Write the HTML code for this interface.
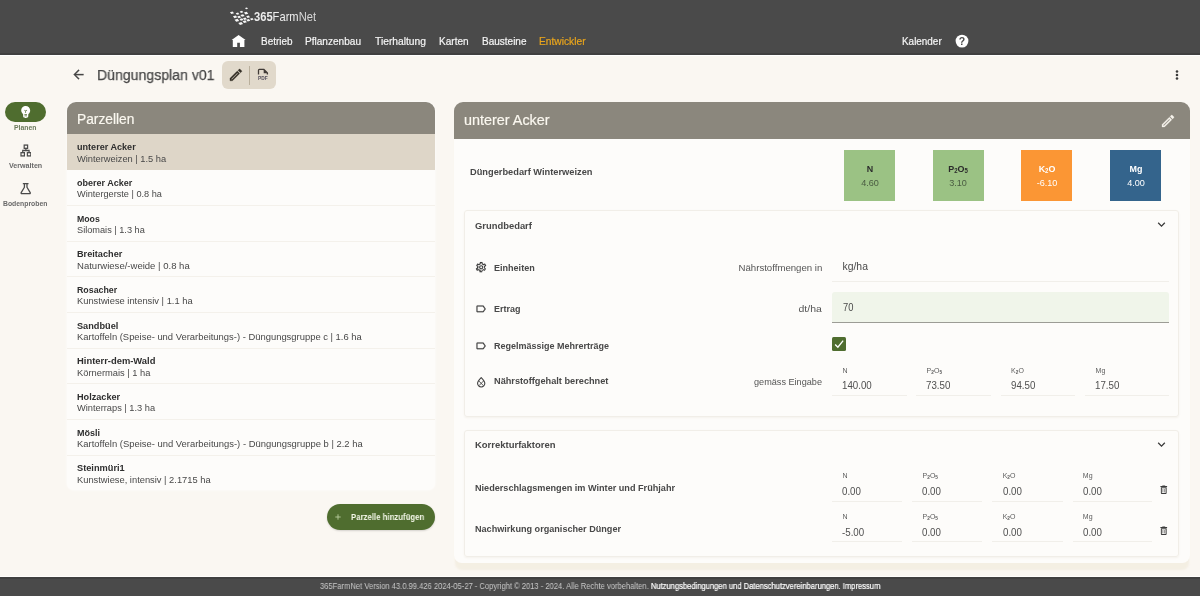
<!DOCTYPE html>
<html lang="de"><head><meta charset="utf-8"><title>Düngungsplan v01</title>
<style>
html,body{margin:0;padding:0}body{width:1200px;height:596px;overflow:hidden;position:relative;background:#faf7f2;font-family:"Liberation Sans", sans-serif}
.t{position:absolute;white-space:nowrap;line-height:20px;height:20px}
#app{position:absolute;left:0;top:0;width:1200px;height:596px;will-change:transform}
sub{font-size:68%;font-weight:700;vertical-align:baseline;position:relative;top:.2em;line-height:0}
</style></head>
<body>
<div id="app">
<div style="position:absolute;left:0;top:0;width:1200px;height:53px;background:#4a4a4a"></div>
<div style="position:absolute;left:0;top:53px;width:1200px;height:2px;background:#404040"></div>
<div style="position:absolute;left:0;top:55px;width:1200px;height:1px;background:#fff"></div>
<svg style="position:absolute;left:0;top:0" width="300" height="40" viewBox="0 0 300 40" fill="#f6f6f6"><polygon points="244.99,7.98 246.95,7.39 248.01,8.72 246.05,9.31"/><polygon points="229.95,12.30 232.61,11.50 234.05,13.30 231.39,14.10"/><polygon points="235.66,13.25 238.04,12.54 239.34,14.15 236.96,14.86"/><polygon points="239.66,11.40 242.04,10.69 243.34,12.30 240.96,13.01"/><polygon points="243.94,12.57 246.74,11.73 248.26,13.63 245.46,14.47"/><polygon points="232.94,16.27 235.74,15.43 237.26,17.33 234.46,18.17"/><polygon points="237.16,16.52 239.68,15.77 241.04,17.48 238.52,18.23"/><polygon points="240.34,14.97 243.14,14.13 244.66,16.03 241.86,16.87"/><polygon points="246.16,16.32 248.68,15.57 250.04,17.28 247.52,18.03"/><polygon points="234.52,19.72 237.60,18.79 239.28,20.88 236.20,21.81"/><polygon points="239.45,19.00 242.11,18.20 243.55,20.00 240.89,20.80"/><polygon points="242.96,18.22 245.48,17.47 246.84,19.18 244.32,19.93"/><polygon points="246.25,19.80 248.91,19.00 250.35,20.80 247.69,21.60"/><polygon points="249.96,18.65 252.34,17.94 253.64,19.55 251.26,20.26"/><polygon points="238.32,22.92 241.40,21.99 243.08,24.08 240.00,25.01"/><polygon points="242.54,21.17 245.34,20.33 246.86,22.23 244.06,23.07"/></svg>
<svg style="position:absolute;left:0;top:0" width="300" height="54" viewBox="0 0 300 54" fill="#fff"><path d="M238.600 35.100L245.600 39.900H244.400V46.900H239.900V42.700H237.200V46.900H232.800V39.900H231.600Z"/></svg>
<svg style="position:absolute;left:955px;top:34px" width="14" height="14" viewBox="0 0 14 14"><circle cx="7" cy="7.1" r="6.4" fill="#fff"/><text x="7" y="10.8" text-anchor="middle" font-family='"Liberation Sans", sans-serif' font-weight="700" font-size="10.5" fill="#4a4a4a">?</text></svg>
<svg style="position:absolute;left:71.3px;top:67.4px" width="15" height="15" viewBox="0 0 24 24" fill="#484848" stroke="#484848" stroke-width="0.4"><path d="M20 11H7.83l5.59-5.59L12 4l-8 8 8 8 1.41-1.41L7.83 13H20v-2z"/></svg>
<div style="position:absolute;left:222px;top:61px;width:54px;height:28px;border-radius:6px;background:#e1d9cb"></div>
<div style="position:absolute;left:249px;top:65.5px;width:1px;height:19px;background:#b9af9c"></div>
<svg style="position:absolute;left:228.3px;top:66.7px" width="15.8" height="15.8" viewBox="0 0 24 24" fill="#352f27" stroke="#352f27" stroke-width="0.45"><path d="M14.060 9.020l.92.920L5.920 19H5v-.92l9.060-9.060M17.660 3c-.25 0-.51.100-.7.290l-1.830 1.830 3.750 3.750 1.830-1.830c.39-.39.39-1.020 0-1.410l-2.340-2.340c-.2-.2-.45-.29-.71-.29zm-3.600 3.190L3 17.250V21h3.750L17.810 9.940l-3.750-3.750z"/></svg>
<svg style="position:absolute;left:256px;top:67.3px" width="14" height="15" viewBox="0 0 14 15"><path d="M2.500 7.400V3.200a.9.900 0 0 1 .9-.9h4.300l3.700 3.700v1.400" fill="none" stroke="#403a36" stroke-width="1.300" stroke-linejoin="round"/><path d="M7.700 2.300v3.900h3.900z" fill="#403a36"/><text x="6.900" y="13.100" text-anchor="middle" font-family='"Liberation Sans", sans-serif' font-weight="700" font-size="4.800" fill="#55505c">PDF</text></svg>
<svg style="position:absolute;left:1170.4px;top:67.7px" width="14" height="14" viewBox="0 0 24 24" fill="#3a3a3a"><circle cx="12" cy="6" r="2.2"/><circle cx="12" cy="12" r="2.2"/><circle cx="12" cy="18" r="2.2"/></svg>
<div style="position:absolute;left:5px;top:102px;width:41px;height:20px;border-radius:10px;background:#4f6d2f"></div>
<svg style="position:absolute;left:17.950px;top:104.150px" width="15.400" height="15.400" viewBox="0 0 24 24" fill="#fff"><path d="M12 3c-.46 0-.93.04-1.4.14-2.76.53-4.96 2.76-5.48 5.52-.48 2.61.48 5.01 2.22 6.56.43.38.66.91.66 1.47V19c0 1.1.9 2 2 2h.28c.35.6.98 1 1.72 1s1.38-.4 1.72-1H14c1.1 0 2-.9 2-2v-2.31c0-.55.22-1.09.64-1.46C18.090 13.950 19 12.080 19 10c0-3.870-3.130-7-7-7zm2 16h-4v-1h4v1zm0-2h-4v-1h4v1zm-1.500-5.590V14h-1v-2.590L9.670 9.590l.71-.71L12 10.500l1.620-1.620.71.710-1.830 1.820z"/></svg>
<svg style="position:absolute;left:19.6px;top:144px" width="11.800" height="13" preserveAspectRatio="none" viewBox="0 0 24 24" fill="none" stroke="#4a4a4a" stroke-width="2.400" stroke-linejoin="miter"><rect x="8.500" y="2" width="7" height="6"/><rect x="2" y="16" width="7" height="6"/><rect x="15" y="16" width="7" height="6"/><path d="M12 8v4M5.500 16v-4h13v4"/></svg>
<svg style="position:absolute;left:18.900px;top:182px" width="13.400" height="13.400" viewBox="0 0 24 24" fill="none" stroke="#4a4a4a" stroke-width="2.300" stroke-linejoin="round" stroke-linecap="round"><path d="M7.800 3h8.400M9.700 3v6.400L3.900 19c-.5.900.1 2 1.100 2h14c1 0 1.600-1.100 1.100-2L14.300 9.400V3"/></svg>
<div style="position:absolute;left:67px;top:102px;width:368px;height:388px;border-radius:9px 9px 7px 7px;background:#fdfcfa;box-shadow:0 0 3px rgba(255,255,255,.9);overflow:hidden"><div style="position:absolute;left:0;top:0;width:100%;height:32.2px;background:#8b877d"></div><div style="position:absolute;left:0;top:32.2px;width:100%;height:35.6px;background:#ded6c8"></div><div style="position:absolute;left:0;top:103.04px;width:100%;height:1px;background:#f4f1eb"></div><div style="position:absolute;left:0;top:138.71px;width:100%;height:1px;background:#f4f1eb"></div><div style="position:absolute;left:0;top:174.38px;width:100%;height:1px;background:#f4f1eb"></div><div style="position:absolute;left:0;top:210.05px;width:100%;height:1px;background:#f4f1eb"></div><div style="position:absolute;left:0;top:245.72px;width:100%;height:1px;background:#f4f1eb"></div><div style="position:absolute;left:0;top:281.39px;width:100%;height:1px;background:#f4f1eb"></div><div style="position:absolute;left:0;top:317.06px;width:100%;height:1px;background:#f4f1eb"></div><div style="position:absolute;left:0;top:352.73px;width:100%;height:1px;background:#f4f1eb"></div></div>
<div style="position:absolute;left:326.5px;top:504.2px;width:108.8px;height:25.4px;border-radius:13px;background:#4f6d2f;box-shadow:0 1px 2px rgba(0,0,0,.15)"></div>
<svg style="position:absolute;left:334.2px;top:513px" width="8" height="8" viewBox="0 0 8 8" stroke="#b9cd9e" stroke-width="0.900"><path d="M4 1.300v5.400M1.300 4h5.400"/></svg>
<div style="position:absolute;left:454.3px;top:102px;width:735.5px;height:461px;border-radius:9px 9px 8px 8px;background:#fdfcfa;box-shadow:0 8px 2px -1px rgba(205,185,135,.13);overflow:hidden"><div style="position:absolute;left:0;top:0;width:100%;height:36.6px;background:#8b877d"></div><div style="position:absolute;left:10px;top:107.5px;width:715px;height:207.3px;border:1px solid #f1eee8;border-radius:3px;box-shadow:0 1px 2px rgba(150,130,90,.08);box-sizing:border-box"></div><div style="position:absolute;left:10px;top:328px;width:715px;height:126.8px;border:1px solid #f1eee8;border-radius:3px;box-shadow:0 1px 2px rgba(150,130,90,.08);box-sizing:border-box"></div></div>
<svg style="position:absolute;left:1160.200px;top:112.9px" width="16" height="16" viewBox="0 0 24 24" fill="#f6f3ec" stroke="#f6f3ec" stroke-width="0.4"><path d="M14.060 9.020l.92.920L5.920 19H5v-.92l9.060-9.060M17.660 3c-.25 0-.51.100-.7.290l-1.830 1.830 3.750 3.750 1.830-1.830c.39-.39.39-1.020 0-1.410l-2.340-2.340c-.2-.2-.45-.29-.71-.29zm-3.600 3.190L3 17.250V21h3.750L17.810 9.940l-3.750-3.750z"/></svg>
<div style="position:absolute;left:844.1px;top:150.3px;width:51px;height:51px;background:#9bc284"></div>
<div style="position:absolute;left:932.7px;top:150.3px;width:51px;height:51px;background:#9bc284"></div>
<div style="position:absolute;left:1021.4px;top:150.3px;width:51px;height:51px;background:#fb9634"></div>
<div style="position:absolute;left:1110px;top:150.3px;width:51px;height:51px;background:#34648c"></div>
<svg style="position:absolute;left:1154px;top:217.3px" width="15" height="15" viewBox="0 0 24 24" fill="#3a3a3a"><path d="M16.590 8.590L12 13.170 7.410 8.590 6 10l6 6 6-6z"/></svg>
<svg style="position:absolute;left:1153.9px;top:437.2px" width="15" height="15" viewBox="0 0 24 24" fill="#3a3a3a"><path d="M16.590 8.590L12 13.170 7.410 8.590 6 10l6 6 6-6z"/></svg>
<svg style="position:absolute;left:474.7px;top:261.100px" width="12.400" height="12.400" viewBox="0 0 24 24" fill="#3c3c3c" stroke="#3c3c3c" stroke-width="0.15"><path d="M19.430 12.980c.04-.32.070-.64.070-.98 0-.34-.03-.66-.07-.98l2.110-1.650c.19-.15.240-.42.120-.64l-2-3.460c-.09-.16-.26-.25-.44-.25-.06 0-.12.010-.17.030l-2.490 1c-.52-.4-1.080-.73-1.690-.98l-.38-2.650C14.460 2.180 14.250 2 14 2h-4c-.25 0-.46.180-.49.420l-.38 2.650c-.61.250-1.170.59-1.690.98l-2.490-1c-.06-.02-.12-.03-.18-.03-.17 0-.34.090-.43.250l-2 3.460c-.13.220-.07.490.12.640l2.110 1.650c-.4.320-.7.650-.7.980 0 .33.030.66.070.98l-2.110 1.650c-.19.150-.24.420-.12.640l2 3.460c.9.160.26.250.44.250.06 0 .12-.1.170-.03l2.490-1c.52.400 1.080.73 1.690.98l.38 2.650c.3.240.24.420.49.420h4c.25 0 .46-.18.490-.42l.38-2.650c.61-.25 1.170-.59 1.690-.98l2.490 1c.6.020.12.030.18.030.17 0 .34-.9.430-.25l2-3.460c.12-.22.070-.49-.12-.64l-2.110-1.650zm-1.980-1.710c.4.310.5.520.5.730 0 .21-.2.430-.5.730l-.14 1.130.89.700 1.080.84-.7 1.210-1.270-.51-1.040-.42-.9.680c-.43.320-.84.560-1.250.73l-1.060.43-.16 1.130-.2 1.350h-1.400l-.19-1.350-.16-1.130-1.060-.43c-.43-.18-.83-.41-1.230-.71l-.91-.7-1.060.43-1.270.51-.7-1.210 1.080-.84.890-.7-.14-1.130c-.03-.31-.05-.54-.05-.74s.02-.43.050-.73l.14-1.130-.89-.7-1.080-.84.700-1.210 1.270.51 1.040.42.900-.68c.43-.32.840-.56 1.250-.73l1.060-.43.160-1.130.2-1.350h1.390l.19 1.350.16 1.130 1.060.43c.43.180.83.410 1.230.71l.91.700 1.060-.43 1.270-.51.700 1.210-1.070.85-.89.700.14 1.130zM12 8c-2.210 0-4 1.790-4 4s1.790 4 4 4 4-1.790 4-4-1.790-4-4-4zm0 6c-1.100 0-2-.9-2-2s.9-2 2-2 2 .9 2 2-.9 2-2 2z"/></svg>
<div style="position:absolute;left:832px;top:280.8px;width:337px;height:1px;background:#f1efea"></div>
<svg style="position:absolute;left:474.5px;top:302.5px" width="11.800" height="11.800" viewBox="0 0 24 24" fill="#404040" stroke="#404040" stroke-width="0.35"><path d="M17.630 5.840C17.270 5.330 16.670 5 16 5L5 5.010C3.900 5.010 3 5.900 3 7v10c0 1.100.9 1.990 2 1.990L16 19c.67 0 1.270-.33 1.630-.84L22 12l-4.370-6.160zM16 17H5V7h11l3.550 5L16 17z"/></svg>
<div style="position:absolute;left:832px;top:292.3px;width:337px;height:29.6px;background:#f0f5ea;border-radius:3px 3px 0 0"></div>
<div style="position:absolute;left:832px;top:321.5px;width:337px;height:1.6px;background:#9c9c95"></div>
<svg style="position:absolute;left:474.5px;top:339.7px" width="11.800" height="11.800" viewBox="0 0 24 24" fill="#404040" stroke="#404040" stroke-width="0.35"><path d="M17.630 5.840C17.270 5.330 16.670 5 16 5L5 5.010C3.900 5.010 3 5.900 3 7v10c0 1.100.9 1.990 2 1.990L16 19c.67 0 1.270-.33 1.630-.84L22 12l-4.370-6.160zM16 17H5V7h11l3.550 5L16 17z"/></svg>
<div style="position:absolute;left:832px;top:337.3px;width:14.2px;height:14.2px;border-radius:1.500px;background:#4f6d2f"></div>
<svg style="position:absolute;left:832px;top:337.3px" width="14.200" height="14.200" viewBox="0 0 14 14" fill="none" stroke="#fff" stroke-width="1.300"><path d="M3.100 7.400l2.700 2.700 5.200-6.600"/></svg>
<svg style="position:absolute;left:474.6px;top:376px" width="12.400" height="12.400" viewBox="0 0 24 24" fill="none" stroke="#404040" stroke-width="2.200"><path d="M12 3.200C8.500 6.800 5 10.200 5 14.200a7 7 0 0 0 14 0c0-4-3.500-7.400-7-11z" stroke-linejoin="round"/><path d="M7.600 9.800l8.800 9M16.400 9.800l-8.800 9" stroke-width="1.700"/></svg>
<div style="position:absolute;left:832px;top:394.8px;width:74.5px;height:1px;background:#f1efea"></div>
<div style="position:absolute;left:916px;top:394.8px;width:75px;height:1px;background:#f1efea"></div>
<div style="position:absolute;left:1000.5px;top:394.8px;width:74.5px;height:1px;background:#f1efea"></div>
<div style="position:absolute;left:1085px;top:394.8px;width:83.59999999999991px;height:1px;background:#f1efea"></div>
<div style="position:absolute;left:832.0px;top:501.2px;width:70.3px;height:1px;background:#f1efea"></div>
<div style="position:absolute;left:912.1px;top:501.2px;width:70.3px;height:1px;background:#f1efea"></div>
<div style="position:absolute;left:992.3px;top:501.2px;width:70.3px;height:1px;background:#f1efea"></div>
<div style="position:absolute;left:1072.5px;top:501.2px;width:79.5px;height:1px;background:#f1efea"></div>
<svg style="position:absolute;left:1158.3px;top:483.95px" width="11.500" height="11.500" viewBox="0 0 24 24" fill="#3c3c3c"><path d="M6 19c0 1.100.9 2 2 2h8c1.100 0 2-.9 2-2V7H6v12zM8 9h8v10H8V9zm7.500-5l-1-1h-5l-1 1H5v2h14V4h-3.500z"/><path d="M10.200 10.500v7M13.800 10.500v7" stroke="#3c3c3c" stroke-width="1.200"/></svg>
<div style="position:absolute;left:832.0px;top:541.4px;width:70.3px;height:1px;background:#f1efea"></div>
<div style="position:absolute;left:912.1px;top:541.4px;width:70.3px;height:1px;background:#f1efea"></div>
<div style="position:absolute;left:992.3px;top:541.4px;width:70.3px;height:1px;background:#f1efea"></div>
<div style="position:absolute;left:1072.5px;top:541.4px;width:79.5px;height:1px;background:#f1efea"></div>
<svg style="position:absolute;left:1158.3px;top:524.85px" width="11.500" height="11.500" viewBox="0 0 24 24" fill="#3c3c3c"><path d="M6 19c0 1.100.9 2 2 2h8c1.100 0 2-.9 2-2V7H6v12zM8 9h8v10H8V9zm7.500-5l-1-1h-5l-1 1H5v2h14V4h-3.500z"/><path d="M10.200 10.500v7M13.800 10.500v7" stroke="#3c3c3c" stroke-width="1.200"/></svg>
<div style="position:absolute;left:0;top:577px;width:1200px;height:20px;background:#4a4a4a"></div>
<div style="position:absolute;left:0;top:575.5px;width:1200px;height:1.5px;background:#fffefc"></div>
<div style="position:absolute;left:0;top:577px;width:1200px;height:1.5px;background:#404040"></div>
<span class="t" style="font-size:13.2px;font-weight:400;color:#ededed;left:254.30px;top:6.73px;transform:scaleX(0.8455);transform-origin:0 50%"><b>365</b>Farm<span style="color:#d8d8d8">Net</span></span>
<span class="t" style="font-size:11.0px;font-weight:400;color:#f5f5f5;-webkit-text-stroke:0.2px currentColor;left:260.50px;top:30.89px;transform:scaleX(0.9036);transform-origin:0 50%">Betrieb</span>
<span class="t" style="font-size:11.0px;font-weight:400;color:#f5f5f5;-webkit-text-stroke:0.2px currentColor;left:305.20px;top:30.89px;transform:scaleX(0.9155);transform-origin:0 50%">Pflanzenbau</span>
<span class="t" style="font-size:11.0px;font-weight:400;color:#f5f5f5;-webkit-text-stroke:0.2px currentColor;left:374.50px;top:30.89px;transform:scaleX(0.9336);transform-origin:0 50%">Tierhaltung</span>
<span class="t" style="font-size:11.0px;font-weight:400;color:#f5f5f5;-webkit-text-stroke:0.2px currentColor;left:438.70px;top:30.89px;transform:scaleX(0.9130);transform-origin:0 50%">Karten</span>
<span class="t" style="font-size:11.0px;font-weight:400;color:#f5f5f5;-webkit-text-stroke:0.2px currentColor;left:481.70px;top:30.89px;transform:scaleX(0.9093);transform-origin:0 50%">Bausteine</span>
<span class="t" style="font-size:11.0px;font-weight:400;color:#e9a51c;-webkit-text-stroke:0.2px currentColor;left:539.20px;top:30.89px;transform:scaleX(0.9297);transform-origin:0 50%">Entwickler</span>
<span class="t" style="font-size:11.0px;font-weight:400;color:#f5f5f5;-webkit-text-stroke:0.2px currentColor;left:901.60px;top:30.89px;transform:scaleX(0.9013);transform-origin:0 50%">Kalender</span>
<span class="t" style="font-size:15.0px;font-weight:400;color:#474747;-webkit-text-stroke:0.25px currentColor;left:97.00px;top:65.30px;transform:scaleX(0.9392);transform-origin:0 50%">Düngungsplan v01</span>
<span class="t" style="font-size:8.0px;font-weight:700;color:#6b7a5c;left:14.10px;top:117.53px;transform:scaleX(0.8577);transform-origin:0 50%">Planen</span>
<span class="t" style="font-size:8.0px;font-weight:700;color:#696969;left:8.60px;top:156.03px;transform:scaleX(0.8887);transform-origin:0 50%">Verwalten</span>
<span class="t" style="font-size:8.0px;font-weight:700;color:#696969;left:3.20px;top:194.23px;transform:scaleX(0.8538);transform-origin:0 50%">Bodenproben</span>
<span class="t" style="font-size:15.0px;font-weight:400;color:#fbf8f0;-webkit-text-stroke:0.2px currentColor;left:77.30px;top:109.30px;transform:scaleX(0.9177);transform-origin:0 50%">Parzellen</span>
<span class="t" style="font-size:9.4px;font-weight:700;color:#2e2e2e;left:77.10px;top:137.24px;transform:scaleX(0.9682);transform-origin:0 50%">unterer Acker</span>
<span class="t" style="font-size:9.4px;font-weight:400;color:#484848;left:77.10px;top:148.64px;transform:scaleX(0.9913);transform-origin:0 50%">Winterweizen | 1.5 ha</span>
<span class="t" style="font-size:9.4px;font-weight:700;color:#2e2e2e;left:77.10px;top:172.91px;transform:scaleX(0.9600);transform-origin:0 50%">oberer Acker</span>
<span class="t" style="font-size:9.4px;font-weight:400;color:#484848;left:77.10px;top:184.31px;transform:scaleX(0.9774);transform-origin:0 50%">Wintergerste | 0.8 ha</span>
<span class="t" style="font-size:9.4px;font-weight:700;color:#2e2e2e;left:77.10px;top:208.58px;transform:scaleX(0.9312);transform-origin:0 50%">Moos</span>
<span class="t" style="font-size:9.4px;font-weight:400;color:#484848;left:77.10px;top:219.98px;transform:scaleX(0.9806);transform-origin:0 50%">Silomais | 1.3 ha</span>
<span class="t" style="font-size:9.4px;font-weight:700;color:#2e2e2e;left:77.10px;top:244.25px;transform:scaleX(0.9765);transform-origin:0 50%">Breitacher</span>
<span class="t" style="font-size:9.4px;font-weight:400;color:#484848;left:77.10px;top:255.65px;transform:scaleX(1.0169);transform-origin:0 50%">Naturwiese/-weide | 0.8 ha</span>
<span class="t" style="font-size:9.4px;font-weight:700;color:#2e2e2e;left:77.10px;top:279.92px;transform:scaleX(0.9407);transform-origin:0 50%">Rosacher</span>
<span class="t" style="font-size:9.4px;font-weight:400;color:#484848;left:77.10px;top:291.32px;transform:scaleX(0.9961);transform-origin:0 50%">Kunstwiese intensiv | 1.1 ha</span>
<span class="t" style="font-size:9.4px;font-weight:700;color:#2e2e2e;left:77.10px;top:315.59px;transform:scaleX(0.9786);transform-origin:0 50%">Sandbüel</span>
<span class="t" style="font-size:9.4px;font-weight:400;color:#484848;left:77.10px;top:326.99px;transform:scaleX(1.0039);transform-origin:0 50%">Kartoffeln (Speise- und Verarbeitungs-) - Düngungsgruppe c | 1.6 ha</span>
<span class="t" style="font-size:9.4px;font-weight:700;color:#2e2e2e;left:77.10px;top:351.26px;transform-origin:0 50%">Hinterr-dem-Wald</span>
<span class="t" style="font-size:9.4px;font-weight:400;color:#484848;left:77.10px;top:362.66px;transform:scaleX(0.9956);transform-origin:0 50%">Körnermais | 1 ha</span>
<span class="t" style="font-size:9.4px;font-weight:700;color:#2e2e2e;left:77.10px;top:386.93px;transform:scaleX(0.9730);transform-origin:0 50%">Holzacker</span>
<span class="t" style="font-size:9.4px;font-weight:400;color:#484848;left:77.10px;top:398.33px;transform:scaleX(0.9880);transform-origin:0 50%">Winterraps | 1.3 ha</span>
<span class="t" style="font-size:9.4px;font-weight:700;color:#2e2e2e;left:77.10px;top:422.60px;transform:scaleX(0.9596);transform-origin:0 50%">Mösli</span>
<span class="t" style="font-size:9.4px;font-weight:400;color:#484848;left:77.10px;top:434.00px;transform:scaleX(1.0052);transform-origin:0 50%">Kartoffeln (Speise- und Verarbeitungs-) - Düngungsgruppe b | 2.2 ha</span>
<span class="t" style="font-size:9.4px;font-weight:700;color:#2e2e2e;left:77.10px;top:458.27px;transform:scaleX(0.9845);transform-origin:0 50%">Steinmüri1</span>
<span class="t" style="font-size:9.4px;font-weight:400;color:#484848;left:77.10px;top:469.67px;transform:scaleX(0.9948);transform-origin:0 50%">Kunstwiese, intensiv | 2.1715 ha</span>
<span class="t" style="font-size:9.4px;font-weight:700;color:#f3f7e8;left:350.60px;top:506.74px;transform:scaleX(0.8325);transform-origin:0 50%">Parzelle hinzufügen</span>
<span class="t" style="font-size:15.0px;font-weight:400;color:#fbf8f0;-webkit-text-stroke:0.2px currentColor;left:463.80px;top:110.00px;transform:scaleX(0.9594);transform-origin:0 50%">unterer Acker</span>
<span class="t" style="font-size:9.6px;font-weight:700;color:#484848;left:469.90px;top:161.67px;transform:scaleX(0.9662);transform-origin:0 50%">Düngerbedarf Winterweizen</span>
<span class="t" style="font-size:9.4px;font-weight:700;color:#2b2b2b;left:769.60px;width:200px;text-align:center;top:159.04px;transform:scaleX(0.9500);transform-origin:50% 50%">N</span>
<span class="t" style="font-size:9.4px;font-weight:400;color:#4a5c42;left:769.60px;width:200px;text-align:center;top:172.94px;transform:scaleX(0.9700);transform-origin:50% 50%">4.60</span>
<span class="t" style="font-size:9.4px;font-weight:700;color:#2b2b2b;left:858.20px;width:200px;text-align:center;top:159.04px;transform:scaleX(0.9500);transform-origin:50% 50%">P<sub>2</sub>O<sub>5</sub></span>
<span class="t" style="font-size:9.4px;font-weight:400;color:#4a5c42;left:858.20px;width:200px;text-align:center;top:172.94px;transform:scaleX(0.9700);transform-origin:50% 50%">3.10</span>
<span class="t" style="font-size:9.4px;font-weight:700;color:#fff;left:946.90px;width:200px;text-align:center;top:159.04px;transform:scaleX(0.9500);transform-origin:50% 50%">K<sub>2</sub>O</span>
<span class="t" style="font-size:9.4px;font-weight:400;color:#fff;left:946.90px;width:200px;text-align:center;top:172.94px;transform:scaleX(0.9700);transform-origin:50% 50%">-6.10</span>
<span class="t" style="font-size:9.4px;font-weight:700;color:#fff;left:1035.50px;width:200px;text-align:center;top:159.04px;transform:scaleX(0.9500);transform-origin:50% 50%">Mg</span>
<span class="t" style="font-size:9.4px;font-weight:400;color:#fff;left:1035.50px;width:200px;text-align:center;top:172.94px;transform:scaleX(0.9700);transform-origin:50% 50%">4.00</span>
<span class="t" style="font-size:9.8px;font-weight:700;color:#484848;left:475.30px;top:216.20px;transform:scaleX(0.9591);transform-origin:0 50%">Grundbedarf</span>
<span class="t" style="font-size:9.8px;font-weight:700;color:#484848;left:493.50px;top:257.50px;transform:scaleX(0.9230);transform-origin:0 50%">Einheiten</span>
<span class="t" style="font-size:9.8px;font-weight:400;color:#555;right:378.00px;top:257.50px;transform:scaleX(0.9821);transform-origin:100% 50%">Nährstoffmengen in</span>
<span class="t" style="font-size:10.4px;font-weight:400;color:#4a4a4a;left:842.50px;top:256.90px;transform-origin:0 50%">kg/ha</span>
<span class="t" style="font-size:9.8px;font-weight:700;color:#484848;left:493.50px;top:298.60px;transform:scaleX(0.9148);transform-origin:0 50%">Ertrag</span>
<span class="t" style="font-size:9.8px;font-weight:400;color:#555;right:378.00px;top:298.90px;transform:scaleX(1.0690);transform-origin:100% 50%">dt/ha</span>
<span class="t" style="font-size:10.4px;font-weight:400;color:#4a4a4a;left:842.50px;top:298.00px;transform:scaleX(0.8995);transform-origin:0 50%">70</span>
<span class="t" style="font-size:9.8px;font-weight:700;color:#484848;left:493.50px;top:335.60px;transform:scaleX(0.9174);transform-origin:0 50%">Regelmässige Mehrerträge</span>
<span class="t" style="font-size:9.8px;font-weight:700;color:#484848;left:493.50px;top:371.20px;transform:scaleX(0.9382);transform-origin:0 50%">Nährstoffgehalt berechnet</span>
<span class="t" style="font-size:9.8px;font-weight:400;color:#555;right:378.00px;top:371.80px;transform:scaleX(0.9317);transform-origin:100% 50%">gemäss Eingabe</span>
<span class="t" style="font-size:7.0px;font-weight:400;color:#5c5c5c;left:842.60px;top:360.57px;transform-origin:0 50%">N</span>
<span class="t" style="font-size:10.4px;font-weight:400;color:#505050;left:842.30px;top:376.00px;transform:scaleX(0.9370);transform-origin:0 50%">140.00</span>
<span class="t" style="font-size:7.0px;font-weight:400;color:#5c5c5c;left:926.60px;top:360.57px;transform-origin:0 50%">P<sub>2</sub>O<sub>5</sub></span>
<span class="t" style="font-size:10.4px;font-weight:400;color:#505050;left:926.30px;top:376.00px;transform:scaleX(0.9370);transform-origin:0 50%">73.50</span>
<span class="t" style="font-size:7.0px;font-weight:400;color:#5c5c5c;left:1011.10px;top:360.57px;transform-origin:0 50%">K<sub>2</sub>O</span>
<span class="t" style="font-size:10.4px;font-weight:400;color:#505050;left:1010.80px;top:376.00px;transform:scaleX(0.9370);transform-origin:0 50%">94.50</span>
<span class="t" style="font-size:7.0px;font-weight:400;color:#5c5c5c;left:1095.60px;top:360.57px;transform-origin:0 50%">Mg</span>
<span class="t" style="font-size:10.4px;font-weight:400;color:#505050;left:1095.30px;top:376.00px;transform:scaleX(0.9370);transform-origin:0 50%">17.50</span>
<span class="t" style="font-size:9.8px;font-weight:700;color:#484848;left:475.30px;top:435.20px;transform:scaleX(0.9664);transform-origin:0 50%">Korrekturfaktoren</span>
<span class="t" style="font-size:9.8px;font-weight:700;color:#484848;left:475.30px;top:478.10px;transform:scaleX(0.9305);transform-origin:0 50%">Niederschlagsmengen im Winter und Frühjahr</span>
<span class="t" style="font-size:9.8px;font-weight:700;color:#484848;left:475.30px;top:518.70px;transform:scaleX(0.9280);transform-origin:0 50%">Nachwirkung organischer Dünger</span>
<span class="t" style="font-size:7.0px;font-weight:400;color:#5c5c5c;left:842.40px;top:466.47px;transform-origin:0 50%">N</span>
<span class="t" style="font-size:10.4px;font-weight:400;color:#505050;left:842.20px;top:482.10px;transform:scaleX(0.9370);transform-origin:0 50%">0.00</span>
<span class="t" style="font-size:7.0px;font-weight:400;color:#5c5c5c;left:922.55px;top:466.47px;transform-origin:0 50%">P<sub>2</sub>O<sub>5</sub></span>
<span class="t" style="font-size:10.4px;font-weight:400;color:#505050;left:922.35px;top:482.10px;transform:scaleX(0.9370);transform-origin:0 50%">0.00</span>
<span class="t" style="font-size:7.0px;font-weight:400;color:#5c5c5c;left:1002.70px;top:466.47px;transform-origin:0 50%">K<sub>2</sub>O</span>
<span class="t" style="font-size:10.4px;font-weight:400;color:#505050;left:1002.50px;top:482.10px;transform:scaleX(0.9370);transform-origin:0 50%">0.00</span>
<span class="t" style="font-size:7.0px;font-weight:400;color:#5c5c5c;left:1082.85px;top:466.47px;transform-origin:0 50%">Mg</span>
<span class="t" style="font-size:10.4px;font-weight:400;color:#505050;left:1082.65px;top:482.10px;transform:scaleX(0.9370);transform-origin:0 50%">0.00</span>
<span class="t" style="font-size:7.0px;font-weight:400;color:#5c5c5c;left:842.40px;top:507.07px;transform-origin:0 50%">N</span>
<span class="t" style="font-size:10.4px;font-weight:400;color:#505050;left:842.20px;top:522.90px;transform:scaleX(0.9370);transform-origin:0 50%">-5.00</span>
<span class="t" style="font-size:7.0px;font-weight:400;color:#5c5c5c;left:922.55px;top:507.07px;transform-origin:0 50%">P<sub>2</sub>O<sub>5</sub></span>
<span class="t" style="font-size:10.4px;font-weight:400;color:#505050;left:922.35px;top:522.90px;transform:scaleX(0.9370);transform-origin:0 50%">0.00</span>
<span class="t" style="font-size:7.0px;font-weight:400;color:#5c5c5c;left:1002.70px;top:507.07px;transform-origin:0 50%">K<sub>2</sub>O</span>
<span class="t" style="font-size:10.4px;font-weight:400;color:#505050;left:1002.50px;top:522.90px;transform:scaleX(0.9370);transform-origin:0 50%">0.00</span>
<span class="t" style="font-size:7.0px;font-weight:400;color:#5c5c5c;left:1082.85px;top:507.07px;transform-origin:0 50%">Mg</span>
<span class="t" style="font-size:10.4px;font-weight:400;color:#505050;left:1082.65px;top:522.90px;transform:scaleX(0.9370);transform-origin:0 50%">0.00</span>
<span class="t" style="font-size:8.6px;font-weight:400;color:#c9c9c9;left:319.90px;top:575.92px;transform:scaleX(0.8830);transform-origin:0 50%">365FarmNet Version 43.0.99.426 2024-05-27 - Copyright © 2013 - 2024. Alle Rechte vorbehalten. <span style="color:#fff;-webkit-text-stroke:0.2px #fff">Nutzungsbedingungen und Datenschutzvereinbarungen. Impressum</span></span>
</div>
</body></html>
